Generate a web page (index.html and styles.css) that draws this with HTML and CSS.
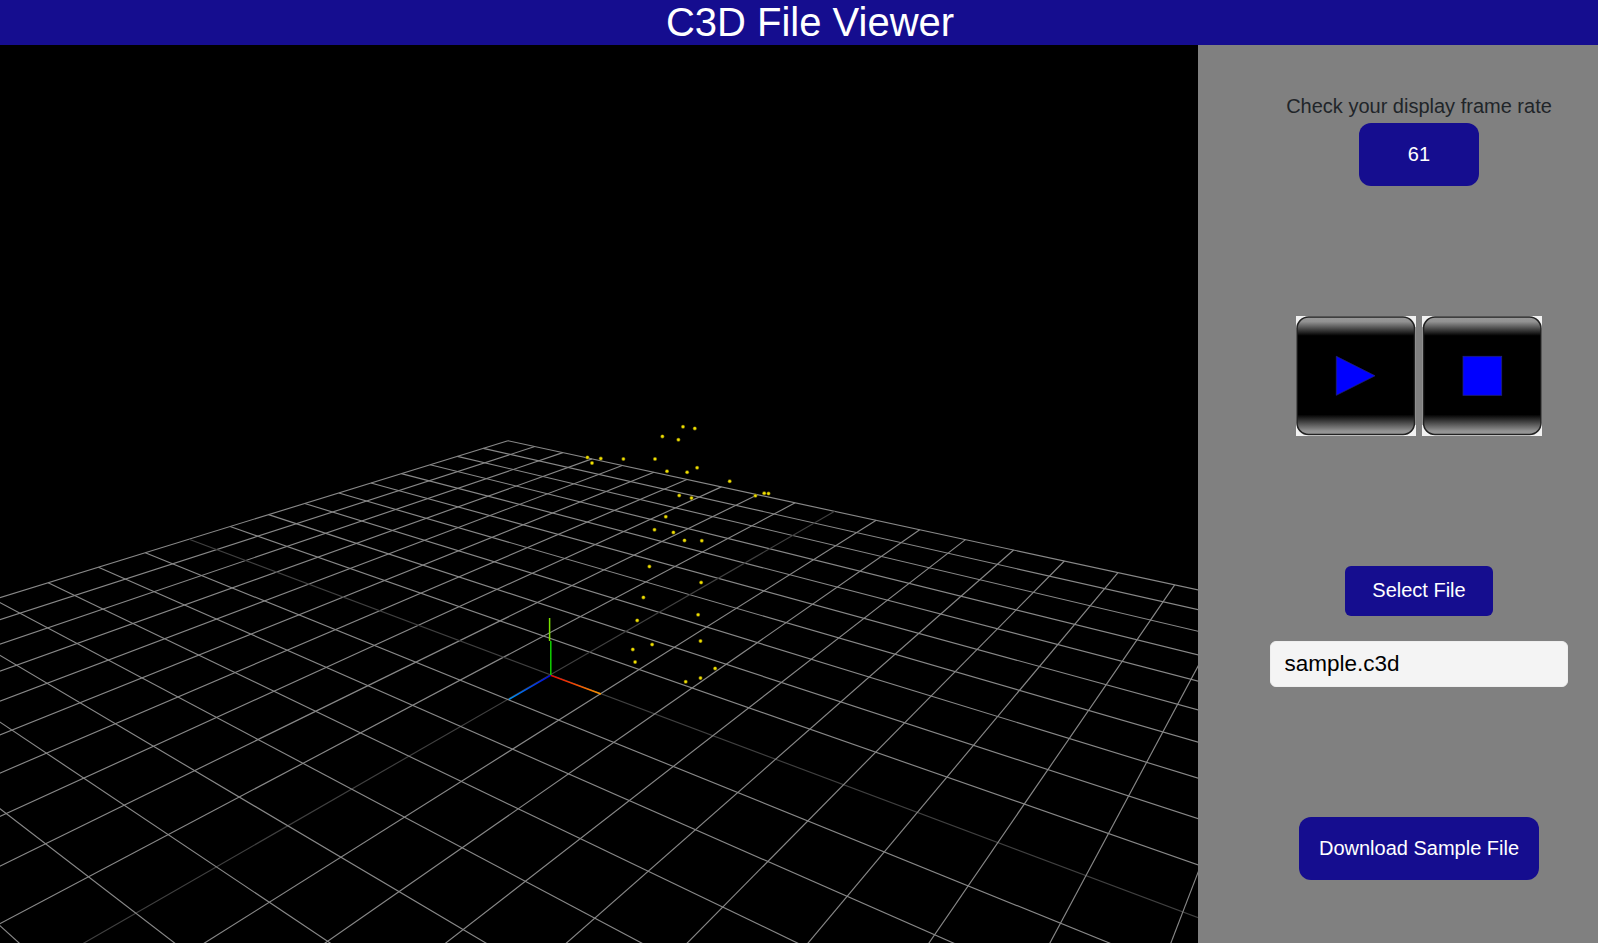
FILE: index.html
```html
<!DOCTYPE html>
<html lang="en">
<head>
<meta charset="utf-8">
<title>C3D File Viewer</title>
<link rel="stylesheet" href="styles.css">
</head>
<body>
<header class="title-bar"><h1 class="title">C3D File Viewer</h1></header>
<main class="layout">
  <svg class="viewer" id="viewer" viewBox="0 45 1198 898" role="img" aria-label="3D marker view">
    <defs>
      <linearGradient id="axis-x" gradientUnits="userSpaceOnUse" x1="550.7" y1="675.3" x2="601" y2="694">
        <stop offset="0" stop-color="#f00000"/><stop offset="1" stop-color="#f89800"/>
      </linearGradient>
      <linearGradient id="axis-z" gradientUnits="userSpaceOnUse" x1="550.7" y1="675.3" x2="509" y2="699.3">
        <stop offset="0" stop-color="#0000e0"/><stop offset="1" stop-color="#0098f8"/>
      </linearGradient>
    </defs>
    <g id="grid"></g>
    <line x1="550.7" y1="675.3" x2="601" y2="694" stroke="url(#axis-x)" stroke-width="1.4"/>
    <line x1="550.7" y1="675.3" x2="509" y2="699.3" stroke="url(#axis-z)" stroke-width="1.4"/>
    <path class="axis-low" d="M550.8 675V641"/>
    <path class="axis-high" d="M549.6 641V618"/>
    <g id="markers"></g>
  </svg>
  <aside class="panel">
    <section class="rate">
      <span class="rate-label">Check your display frame rate</span>
      <button class="btn btn-rate">61</button>
    </section>
    <section class="controls">
      <svg class="control" viewBox="0 0 120 120" role="img" aria-label="Play">
        <defs>
          <linearGradient id="gloss" x1="0" y1="0" x2="0" y2="1">
            <stop offset="0" stop-color="#999"/><stop offset=".04" stop-color="#929292"/>
            <stop offset=".16" stop-color="#000"/><stop offset=".83" stop-color="#000"/>
            <stop offset=".97" stop-color="#929292"/><stop offset="1" stop-color="#999"/>
          </linearGradient>
        </defs>
        <rect width="120" height="120" fill="#f2f2f2"/>
        <path d="M119.5 11V109" stroke="#b4b4b4"/>
        <rect x="1" y="1" width="117.5" height="117.5" rx="11.5" fill="url(#gloss)" stroke="#222" stroke-width="1.5"/>
        <path d="M40.3 40.3V79.3L79 59.8Z" fill="#00f" stroke="#22227a" stroke-width=".8"/>
      </svg>
      <svg class="control" viewBox="0 0 120 120" role="img" aria-label="Stop">
        <rect width="120" height="120" fill="#f2f2f2"/>
        <path d="M.5 11V109" stroke="#b4b4b4"/>
        <rect x="1.5" y="1" width="117.5" height="117.5" rx="11.5" fill="url(#gloss)" stroke="#222" stroke-width="1.5"/>
        <rect x="41" y="40.3" width="38.7" height="39" fill="#00f" stroke="#22227a" stroke-width=".8"/>
      </svg>
    </section>
    <section class="file">
      <button class="btn btn-select">Select File</button>
      <input class="file-name" type="text" value="sample.c3d" aria-label="File name">
    </section>
    <button class="btn btn-download">Download Sample File</button>
  </aside>
</main>
<script src="viewer.js"></script>
</body>
</html>
```

FILE: styles.css
```css
* { box-sizing: border-box; }

body {
  margin: 0;
  height: 943px;
  display: flex;
  flex-direction: column;
  overflow: hidden;
  font-family: "Liberation Sans", Arial, sans-serif;
  font-size: 20px;
  color: #212529;
  background: #808080;
}

.title-bar {
  height: 45px;
  padding-left: 22px;
  background: #150d8f;
  color: #fff;
  text-align: center;
}

.title {
  margin: 0;
  font-size: 40px;
  font-weight: 400;
  line-height: 45px;
}

.layout { display: flex; flex: 1; }

.viewer {
  display: block;
  width: 1198px;
  height: 898px;
  background: #000;
}

.axis-low { stroke: #10d000; stroke-width: 1.5; }
.axis-high { stroke: #78e000; stroke-width: 1.5; }
.grid-line { stroke: #888; stroke-width: 1.15; }
.grid-center { stroke: #404040; stroke-width: 1.15; }
.marker { fill: #f0e000; }
.marker-edge { fill: #7c7200; }

.panel {
  width: 400px;
  padding: 46px 30px 0 72px;
  display: flex;
  flex-direction: column;
  align-items: center;
}

.rate {
  display: flex;
  flex-direction: column;
  align-items: center;
  gap: 2px;
}

.rate-label { line-height: 30px; }

.btn {
  height: 63px;
  padding: 0;
  border: 0;
  border-radius: 12px;
  background: #150d8f;
  color: #fff;
  font-family: inherit;
  font-size: 20px;
}

.btn-rate { width: 120px; }

.controls {
  display: flex;
  gap: 6px;
  margin-top: 130px;
}

.control { display: block; width: 120px; height: 120px; }

.file {
  display: flex;
  flex-direction: column;
  align-items: center;
  gap: 25px;
  margin-top: 130px;
}

.btn-select {
  width: 148px;
  height: 50px;
  padding-bottom: 2px;
  border-radius: 6px;
}

.file-name {
  width: 298px;
  height: 46px;
  padding: 0 13.5px;
  border: 1px solid #eee;
  border-radius: 6px;
  background: #f4f4f4;
  color: #000;
  font-family: inherit;
  font-size: 22.5px;
}

.btn-download { width: 240px; margin-top: 130px; }
```

FILE: viewer.js
```js
// Known floor positions [gridX, gridZ, screenX, screenY] that fix the camera projection.
const anchors = [
  [-10, -10, 508, 440.7], [0, -10, 835, 511.3], [4, -10, 1014.7, 550],
  [7, -10, 1174.3, 585], [-5, -10, 652.7, 472.3], [-10, 0, 190, 539],
  [-10, 3, 47.7, 582.7], [0, 0, 550.7, 675.3], [1, 0, 600.7, 694],
  [0, 1, 508.5, 699.3], [5, 0, 843, 784.7], [9, 0, 1182.5, 911.3],
  [0, 4, 352, 789], [0, 7, 134.7, 913.3]
];

// Least-squares fit of the eight projection coefficients.
function fitProjection(points) {
  const a = Array.from({ length: 8 }, () => new Array(9).fill(0));
  const add = (row) => {
    for (let i = 0; i < 8; i++) for (let j = 0; j < 9; j++) a[i][j] += row[i] * row[j];
  };
  for (const [u, v, x, y] of points) {
    const p = x / 1000, q = y / 1000;
    add([u, v, 1, 0, 0, 0, -u * p, -v * p, p]);
    add([0, 0, 0, u, v, 1, -u * q, -v * q, q]);
  }
  for (let c = 0; c < 8; c++) {
    let best = c;
    for (let r = c + 1; r < 8; r++) if (Math.abs(a[r][c]) > Math.abs(a[best][c])) best = r;
    [a[c], a[best]] = [a[best], a[c]];
    for (let r = 0; r < 8; r++) {
      if (r === c) continue;
      const f = a[r][c] / a[c][c];
      for (let k = c; k < 9; k++) a[r][k] -= f * a[c][k];
    }
  }
  return a.map((row, i) => row[8] / row[i]);
}

const h = fitProjection(anchors);
const depth = (u, v) => h[6] * u + h[7] * v + 1;
const project = (u, v) => {
  const w = depth(u, v);
  return [1000 * (h[0] * u + h[1] * v + h[2]) / w, 1000 * (h[3] * u + h[4] * v + h[5]) / w];
};

function draw(parent, name, attrs) {
  const el = document.createElementNS("http://www.w3.org/2000/svg", name);
  for (const key in attrs) el.setAttribute(key, attrs[key]);
  parent.appendChild(el);
}

const grid = document.getElementById("grid");
function gridLine(from, to, cls) {
  // Stop short of the camera plane.
  let end = to;
  const d0 = depth(...from), d1 = depth(...to), near = 0.12;
  if (d1 < near) {
    const t = (d0 - near) / (d0 - d1);
    end = [from[0] + (to[0] - from[0]) * t, from[1] + (to[1] - from[1]) * t];
  }
  const [x1, y1] = project(...from), [x2, y2] = project(...end);
  draw(grid, "line", { x1, y1, x2, y2, class: cls });
}
for (let i = -10; i <= 10; i++) {
  const cls = i === 0 ? "grid-center" : "grid-line";
  gridLine([i, -10], [i, 10], cls);
  gridLine([-10, i], [10, i], cls);
}

const markers = [
  [683, 426.8], [694.8, 428.4], [662.4, 436.4], [678.4, 439.8], [587.4, 457.4], [600.8, 458.6],
  [592, 463.1], [623.4, 459], [655, 459], [667, 471.2], [687.1, 472.2], [697.1, 467.8],
  [729.7, 481.2], [755.4, 495.7], [764.2, 493.2], [768.5, 493.6], [679.2, 495.5], [691.5, 498.1],
  [665.8, 516.7], [654.5, 529.7], [673.4, 532.4], [684.5, 540.4], [701.8, 540.8], [649.4, 566.6],
  [701.1, 582.6], [643.4, 597.4], [698.1, 614.8], [637.2, 620.4], [632.8, 649.4], [652.1, 644.6],
  [700.5, 641.1], [635.1, 662.1], [715.1, 668.4], [700.5, 678.1], [685.7, 681.7]
];
const layer = document.getElementById("markers");
for (const [x, y] of markers) {
  draw(layer, "circle", { cx: x, cy: y, r: 2, class: "marker-edge" });
  draw(layer, "circle", { cx: x, cy: y, r: 1.3, class: "marker" });
}
```
